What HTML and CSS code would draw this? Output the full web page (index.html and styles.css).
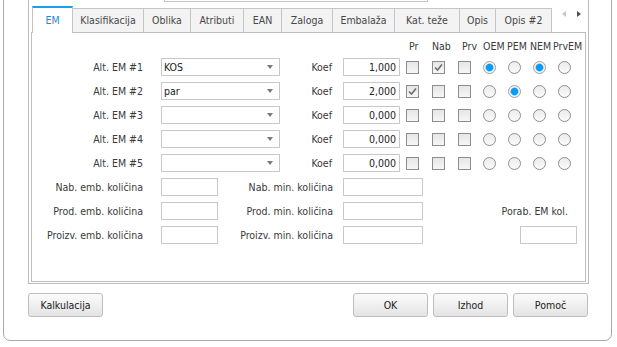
FILE: index.html
```html
<!DOCTYPE html>
<html lang="sl">
  <head>
    <meta charset="UTF-8" />
    <meta name="viewport" content="width=device-width, initial-scale=1.0" />
    <title>Artikel - EM</title>
    <link rel="stylesheet" href="styles.css">
  </head>
  <body>
    <div class="window">
      <div class="frame">
        <div class="topfield"></div>
        <div class="tabs">
          <div class="tab active">EM</div>
          <div class="tab">Klasifikacija</div>
          <div class="tab">Oblika</div>
          <div class="tab">Atributi</div>
          <div class="tab">EAN</div>
          <div class="tab">Zaloga</div>
          <div class="tab">Embalaža</div>
          <div class="tab">Kat. teže</div>
          <div class="tab">Opis</div>
          <div class="tab">Opis #2</div>
          <div class="tab-arrows">
            <span class="arr arr-left"></span>
            <span class="arr arr-right"></span>
          </div>
        </div>
        <div class="panel">
          <div class="em-grid">
            <div class="head-spacer"></div>
            <div class="head h-pr">Pr</div>
            <div class="head h-nab">Nab</div>
            <div class="head h-prv">Prv</div>
            <div class="head h-oem">OEM</div>
            <div class="head h-pem">PEM</div>
            <div class="head h-nem">NEM</div>
            <div class="head h-prvem">PrvEM</div>

            <div class="lbl">Alt. EM #1</div>
            <div class="combo"><span>KOS</span><i class="caret"></i></div>
            <div class="lbl-k">Koef</div>
            <div class="field num">1,000</div>
            <span class="cb"></span>
            <span class="cb checked"><svg width="11" height="11" viewBox="0 0 11 11"><polyline points="2,5.5 4.5,8 9,2.5" /></svg></span>
            <span class="cb"></span>
            <span class="rb on"></span>
            <span class="rb"></span>
            <span class="rb on"></span>
            <span class="rb"></span>

            <div class="lbl">Alt. EM #2</div>
            <div class="combo"><span>par</span><i class="caret"></i></div>
            <div class="lbl-k">Koef</div>
            <div class="field num">2,000</div>
            <span class="cb checked"><svg width="11" height="11" viewBox="0 0 11 11"><polyline points="2,5.5 4.5,8 9,2.5" /></svg></span>
            <span class="cb"></span>
            <span class="cb"></span>
            <span class="rb"></span>
            <span class="rb on"></span>
            <span class="rb"></span>
            <span class="rb"></span>

            <div class="lbl">Alt. EM #3</div>
            <div class="combo"><span></span><i class="caret"></i></div>
            <div class="lbl-k">Koef</div>
            <div class="field num">0,000</div>
            <span class="cb"></span>
            <span class="cb"></span>
            <span class="cb"></span>
            <span class="rb"></span>
            <span class="rb"></span>
            <span class="rb"></span>
            <span class="rb"></span>

            <div class="lbl">Alt. EM #4</div>
            <div class="combo"><span></span><i class="caret"></i></div>
            <div class="lbl-k">Koef</div>
            <div class="field num">0,000</div>
            <span class="cb"></span>
            <span class="cb"></span>
            <span class="cb"></span>
            <span class="rb"></span>
            <span class="rb"></span>
            <span class="rb"></span>
            <span class="rb"></span>

            <div class="lbl">Alt. EM #5</div>
            <div class="combo"><span></span><i class="caret"></i></div>
            <div class="lbl-k">Koef</div>
            <div class="field num">0,000</div>
            <span class="cb"></span>
            <span class="cb"></span>
            <span class="cb"></span>
            <span class="rb"></span>
            <span class="rb"></span>
            <span class="rb"></span>
            <span class="rb"></span>
          </div>

          <div class="qty-grid">
            <div class="lbl">Nab. emb. količina</div>
            <div class="field"></div>
            <div class="lbl-m">Nab. min. količina</div>
            <div class="field wide"></div>
            <div></div>

            <div class="lbl">Prod. emb. količina</div>
            <div class="field"></div>
            <div class="lbl-m">Prod. min. količina</div>
            <div class="field wide"></div>
            <div class="lbl-p">Porab. EM kol.</div>

            <div class="lbl">Proizv. emb. količina</div>
            <div class="field"></div>
            <div class="lbl-m">Proizv. min. količina</div>
            <div class="field wide"></div>
            <div class="field porab"></div>
          </div>
        </div>
      </div>

      <div class="buttons">
        <button class="btn">Kalkulacija</button>
        <div class="btn-group">
          <button class="btn">OK</button>
          <button class="btn">Izhod</button>
          <button class="btn">Pomoč</button>
        </div>
      </div>
    </div>
  </body>
</html>
```

FILE: styles.css
```css
*{
    margin: 0;
    padding: 0;
    box-sizing: border-box;
}
body{
    width: 617px;
    height: 347px;
    overflow: hidden;
    background-color: #ffffff;
    font-family: "DejaVu Sans Condensed", "DejaVu Sans", sans-serif;
    font-size: 10.5px;
    color: #3a3a3a;
}
.window{
    margin: -40px 0 0 3px;
    width: 609px;
    height: 381px;
    border: 1px solid #a8a8a8;
    border-radius: 0 0 7px 7px;
    padding: 5px 22px 0 24px;
}
.frame{
    border: 1px solid #bdbdbd;
    padding: 15px 2px 1px 2px;
}
.topfield{
    margin-left: 133px;
    width: 264px;
    height: 20px;
    border: 1px solid #c4c4c4;
}

/* tabs */
.tabs{
    display: flex;
    align-items: flex-end;
    height: 30px;
    padding-left: 1px;
}
.tab{
    flex: none;
    height: 24px;
    line-height: 22px;
    text-align: center;
    border: 1px solid #c6c6c6;
    border-bottom: none;
    border-left: none;
    background-color: #f3f3f3;
    color: #474747;
    white-space: nowrap;
}
.tab:nth-child(2){ width: 71px; }
.tab:nth-child(3){ width: 47px; }
.tab:nth-child(4){ width: 53px; }
.tab:nth-child(5){ width: 38px; }
.tab:nth-child(6){ width: 51px; }
.tab:nth-child(7){ width: 62px; }
.tab:nth-child(8){ width: 65px; }
.tab:nth-child(9){ width: 36px; }
.tab:nth-child(10){ width: 56px; }
.tab.active{
    width: 41px;
    height: 27px;
    line-height: 25px;
    margin-bottom: -1px;
    border-left: 1px solid #c6c6c6;
    border-top: 2px solid #18a0e8;
    background-color: #ffffff;
    color: #1a8fd8;
}
.tab-arrows{
    display: flex;
    gap: 11px;
    align-self: flex-start;
    margin: 9px 0 0 10px;
}
.arr{
    width: 0;
    height: 0;
    border-top: 3.5px solid transparent;
    border-bottom: 3.5px solid transparent;
}
.arr-left{
    border-right: 4px solid #c8c8c8;
}
.arr-right{
    border-left: 4px solid #505050;
}

.panel{
    height: 250px;
    border: 1px solid #bdbdbd;
    padding-top: 5px;
}

/* alternative EM rows */
.em-grid{
    display: grid;
    grid-template-columns: 129px 119px 63px 63px 26px 26px 19px 25px 25px 25px 25px;
    grid-template-rows: 14px repeat(5, 18px);
    row-gap: 6px;
    align-items: center;
}
.head-spacer{
    grid-column: 1 / 5;
}
.head{
    align-self: end;
    line-height: 12px;
    white-space: nowrap;
}
.h-pr{ padding-left: 3px; }
.h-prv{ padding-left: 4px; }
.h-oem{ padding-left: 6px; }
.h-pem{ padding-left: 5px; }
.h-nem{ padding-left: 3px; }
.h-prvem{ padding-left: 1px; }

.lbl{
    text-align: right;
    padding-right: 18px;
    white-space: nowrap;
    line-height: 18px;
}
.lbl-k{
    text-align: right;
    padding-right: 11px;
}
.combo{
    display: flex;
    justify-content: space-between;
    align-items: center;
    height: 18px;
    border: 1px solid #c8c8c8;
    padding: 0 6px 0 2px;
    color: #222222;
}
.caret{
    width: 0;
    height: 0;
    border-left: 3.5px solid transparent;
    border-right: 3.5px solid transparent;
    border-top: 4px solid #7a7a7a;
}
.field{
    height: 18px;
    width: 57px;
    border: 1px solid #c8c8c8;
    line-height: 16px;
    padding: 0 3px;
    color: #222222;
}
.field.num{
    text-align: right;
}
.cb{
    width: 13px;
    height: 13px;
    border: 1px solid #8c8c8c;
    background: linear-gradient(#e6e6e6, #f6f6f6);
    display: flex;
    align-items: center;
    justify-content: center;
}
.cb svg polyline{
    fill: none;
    stroke: #6e6e6e;
    stroke-width: 1.6;
}
.rb{
    justify-self: center;
    width: 13px;
    height: 13px;
    border-radius: 50%;
    border: 1px solid #8f8f8f;
    background: linear-gradient(#ececec, #fafafa);
}
.rb.on{
    border-color: #a0a0a0;
    background: radial-gradient(circle, #0d9af2 0, #0d9af2 3.2px, #7cc5f2 3.8px, #f4f4f4 4.4px);
}

/* quantities */
.qty-grid{
    display: grid;
    grid-template-columns: 129px 57px 125px 80px 154px;
    grid-template-rows: repeat(3, 18px);
    row-gap: 6px;
    margin-top: 6px;
    align-items: center;
}
.lbl-m{
    text-align: right;
    padding-right: 10px;
    white-space: nowrap;
}
.lbl-p{
    text-align: right;
    padding-right: 9px;
    white-space: nowrap;
}
.field.wide{
    width: 80px;
}
.field.porab{
    justify-self: end;
}

/* bottom buttons */
.buttons{
    display: flex;
    justify-content: space-between;
    margin: 9px 1px 0 0;
}
.btn-group{
    display: flex;
    gap: 5px;
}
.btn{
    width: 75px;
    height: 24px;
    border: 1px solid #bdbdbd;
    border-radius: 3px;
    background: linear-gradient(#fbfbfb, #e4e4e4);
    font-family: inherit;
    font-size: 10.5px;
    color: #222222;
}
```
